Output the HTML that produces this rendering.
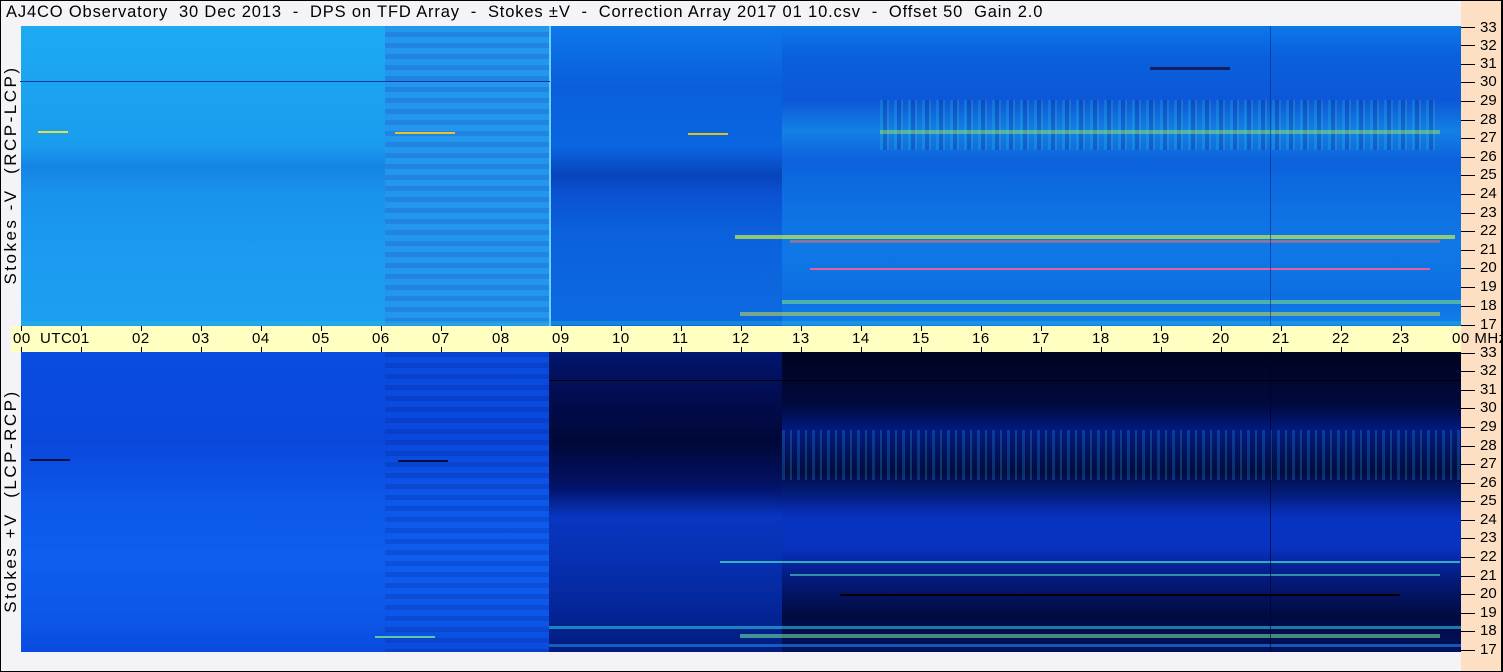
<!DOCTYPE html>
<html><head><meta charset="utf-8"><style>
*{margin:0;padding:0;box-sizing:border-box}
body{width:1503px;height:672px;overflow:hidden;background:#f4f4f8;font-family:"Liberation Sans",sans-serif;position:relative}
.a{position:absolute}
#frame{left:0;top:0;width:1503px;height:672px;border:1px solid #000;border-right:2px solid #000;border-bottom:1px solid #000;z-index:50}
.title{left:6px;top:3px;font-size:16.5px;letter-spacing:0.85px;white-space:pre;color:#000}
.peach{left:1461px;top:0;width:42px;height:672px;background:#fde0c4}
.strip{left:11px;top:326px;width:1450px;height:26px;background:#ffffc2}
.tl{font-size:15px;top:330px;white-space:pre;letter-spacing:.5px}
.yl{font-size:15px;left:1480px;line-height:14px}
.yk{left:1461px;width:14px;height:1px;background:#000}
.vl{font-size:17px;letter-spacing:2.5px;white-space:pre;transform:rotate(-90deg);transform-origin:center;width:300px;text-align:center}
.s{position:absolute;height:2px}
</style></head><body>
<div class="a" id="frame"></div>
<div class="a peach"></div>
<div class="a title">AJ4CO Observatory  30 Dec 2013  -  DPS on TFD Array  -  Stokes ±V  -  Correction Array 2017 01 10.csv  -  Offset 50  Gain 2.0</div>

<!-- TOP PLOT -->
<div class="a" style="left:21px;top:26px;width:364px;height:300px;background:linear-gradient(#1eaaf2 0%,#1a9cee 40%,#1684e4 47%,#1892ec 55%,#1c9cf0 80%,#1e9ef0 100%)"></div>
<div class="a" style="left:385px;top:26px;width:164px;height:300px;background:repeating-linear-gradient(#1892ec 0 6px,#167ee2 6px 11px);opacity:.95"></div>
<div class="a" style="left:549px;top:26px;width:233px;height:300px;background:linear-gradient(#0e78ea 0%,#0a5edc 20%,#0a66e0 40%,#0844bc 50%,#0a52d2 56%,#0b62dc 70%,#0c6ae0 100%)"></div>
<div class="a" style="left:549px;top:26px;width:2px;height:300px;background:#6cd0ff"></div>
<div class="a" style="left:782px;top:26px;width:679px;height:300px;background:linear-gradient(#0c78ea 0%,#0a60dc 10%,#0c58d8 25%,#1480e6 35%,#0c62dc 45%,#0e70e2 60%,#1078e6 75%,#0d6ee2 90%,#1280e8 100%)"></div>
<div class="a" style="left:880px;top:100px;width:560px;height:50px;background:repeating-linear-gradient(90deg,rgba(40,220,200,.2) 0 3px,rgba(10,40,160,.25) 3px 7px,rgba(120,240,120,.15) 7px 9px,transparent 9px 14px)"></div>
<div class="s" style="left:20px;top:81px;width:530px;height:1px;background:#0a3aa0"></div>
<div class="s" style="left:880px;top:130px;width:560px;height:4px;background:rgba(170,240,80,.45)"></div>
<div class="s" style="left:38px;top:131px;width:30px;background:#e0e040"></div>
<div class="s" style="left:395px;top:132px;width:60px;background:#e8c030"></div>
<div class="s" style="left:688px;top:133px;width:40px;background:#e0c020"></div>
<div class="s" style="left:735px;top:235px;width:720px;height:4px;background:rgba(200,240,70,.7)"></div>
<div class="s" style="left:790px;top:240px;width:650px;height:3px;background:rgba(240,120,100,.5)"></div>
<div class="s" style="left:810px;top:268px;width:620px;background:#e860a0"></div>
<div class="s" style="left:782px;top:300px;width:679px;height:4px;background:rgba(140,240,120,.5)"></div>
<div class="s" style="left:740px;top:312px;width:700px;height:4px;background:rgba(220,230,60,.5)"></div>
<div class="s" style="left:21px;top:321px;width:1440px;height:4px;background:rgba(40,200,220,.3)"></div>
<div class="s" style="left:1150px;top:67px;width:80px;height:3px;background:#102060"></div>
<div class="s" style="left:1270px;top:26px;width:1px;height:300px;background:rgba(0,30,120,.5)"></div>

<!-- STRIP -->
<div class="a strip"></div>
<div class="a tl" style="left:13px">00  UTC</div>
<div class="a tl" style="left:72px">01</div><div class="a tl" style="left:132px">02</div><div class="a tl" style="left:192px">03</div><div class="a tl" style="left:252px">04</div><div class="a tl" style="left:312px">05</div><div class="a tl" style="left:372px">06</div><div class="a tl" style="left:432px">07</div><div class="a tl" style="left:492px">08</div><div class="a tl" style="left:552px">09</div><div class="a tl" style="left:612px">10</div><div class="a tl" style="left:672px">11</div><div class="a tl" style="left:732px">12</div><div class="a tl" style="left:792px">13</div><div class="a tl" style="left:852px">14</div><div class="a tl" style="left:912px">15</div><div class="a tl" style="left:972px">16</div><div class="a tl" style="left:1032px">17</div><div class="a tl" style="left:1092px">18</div><div class="a tl" style="left:1152px">19</div><div class="a tl" style="left:1212px">20</div><div class="a tl" style="left:1272px">21</div><div class="a tl" style="left:1332px">22</div><div class="a tl" style="left:1392px">23</div><div class="a tl" style="left:1452px">00 MHz</div>
<div class="a" style="left:0;top:326px;width:1461px;height:26px;background:repeating-linear-gradient(90deg,#000 0 1px,transparent 1px 60px) 21px 0/1440px 5px no-repeat,repeating-linear-gradient(90deg,#000 0 1px,transparent 1px 60px) 21px 21px/1441px 5px no-repeat"></div>

<!-- BOTTOM PLOT -->
<div class="a" style="left:21px;top:352px;width:528px;height:300px;background:linear-gradient(#0a4ce0 0%,#0a48dc 30%,#0c58ea 50%,#0e5ef0 70%,#0c56e8 90%,#0a4ade 100%)"></div>
<div class="a" style="left:385px;top:352px;width:164px;height:300px;background:repeating-linear-gradient(rgba(0,20,120,.18) 0 5px,transparent 5px 11px)"></div>
<div class="a" style="left:549px;top:352px;width:233px;height:300px;background:linear-gradient(#021670 0%,#020c50 15%,#000838 30%,#021268 45%,#0836c0 55%,#0630b0 70%,#04269a 85%,#041c80 100%)"></div>
<div class="a" style="left:782px;top:352px;width:679px;height:300px;background:linear-gradient(#000420 0%,#010a40 18%,#021a80 26%,#010c40 40%,#041e80 48%,#0832c0 55%,#0832c0 65%,#041c80 75%,#020a40 88%,#031060 100%)"></div>
<div class="a" style="left:782px;top:430px;width:679px;height:50px;background:repeating-linear-gradient(90deg,rgba(30,160,240,.25) 0 3px,transparent 3px 8px,rgba(60,220,220,.2) 8px 10px,transparent 10px 15px)"></div>
<div class="s" style="left:549px;top:380px;width:912px;height:1px;background:#000"></div>
<div class="s" style="left:30px;top:459px;width:40px;background:#051040"></div>
<div class="s" style="left:398px;top:460px;width:50px;background:#051040"></div>
<div class="s" style="left:720px;top:561px;width:740px;background:rgba(80,230,200,.7)"></div>
<div class="s" style="left:790px;top:574px;width:650px;background:rgba(80,220,200,.6)"></div>
<div class="s" style="left:840px;top:594px;width:560px;background:#000"></div>
<div class="s" style="left:549px;top:626px;width:912px;height:3px;background:rgba(40,200,230,.6)"></div>
<div class="s" style="left:740px;top:634px;width:700px;height:4px;background:rgba(120,240,160,.55)"></div>
<div class="s" style="left:375px;top:636px;width:60px;background:rgba(120,230,140,.8)"></div>
<div class="s" style="left:549px;top:644px;width:912px;height:3px;background:rgba(30,140,230,.6)"></div>
<div class="s" style="left:1270px;top:352px;width:1px;height:300px;background:rgba(0,0,30,.6)"></div>

<!-- vertical labels -->
<div class="a vl" style="left:-139px;top:165px">Stokes -V  (RCP-LCP)</div>
<div class="a vl" style="left:-139px;top:491px">Stokes +V  (LCP-RCP)</div>

<!-- right axis top -->
<div class="a yk" style="top:27px"></div><div class="a yl" style="top:21px">33</div>
<div class="a yk" style="top:45px"></div><div class="a yl" style="top:39px">32</div>
<div class="a yk" style="top:64px"></div><div class="a yl" style="top:57px">31</div>
<div class="a yk" style="top:82px"></div><div class="a yl" style="top:75px">30</div>
<div class="a yk" style="top:101px"></div><div class="a yl" style="top:94px">29</div>
<div class="a yk" style="top:120px"></div><div class="a yl" style="top:113px">28</div>
<div class="a yk" style="top:138px"></div><div class="a yl" style="top:131px">27</div>
<div class="a yk" style="top:157px"></div><div class="a yl" style="top:150px">26</div>
<div class="a yk" style="top:175px"></div><div class="a yl" style="top:168px">25</div>
<div class="a yk" style="top:194px"></div><div class="a yl" style="top:187px">24</div>
<div class="a yk" style="top:213px"></div><div class="a yl" style="top:206px">23</div>
<div class="a yk" style="top:231px"></div><div class="a yl" style="top:224px">22</div>
<div class="a yk" style="top:250px"></div><div class="a yl" style="top:243px">21</div>
<div class="a yk" style="top:268px"></div><div class="a yl" style="top:261px">20</div>
<div class="a yk" style="top:287px"></div><div class="a yl" style="top:280px">19</div>
<div class="a yk" style="top:306px"></div><div class="a yl" style="top:299px">18</div>
<div class="a yk" style="top:325px"></div><div class="a yl" style="top:318px">17</div>
<!-- right axis bottom -->
<div class="a yk" style="top:353px"></div><div class="a yl" style="top:346px">33</div>
<div class="a yk" style="top:371px"></div><div class="a yl" style="top:364px">32</div>
<div class="a yk" style="top:390px"></div><div class="a yl" style="top:383px">31</div>
<div class="a yk" style="top:408px"></div><div class="a yl" style="top:401px">30</div>
<div class="a yk" style="top:427px"></div><div class="a yl" style="top:420px">29</div>
<div class="a yk" style="top:446px"></div><div class="a yl" style="top:439px">28</div>
<div class="a yk" style="top:464px"></div><div class="a yl" style="top:457px">27</div>
<div class="a yk" style="top:483px"></div><div class="a yl" style="top:476px">26</div>
<div class="a yk" style="top:501px"></div><div class="a yl" style="top:494px">25</div>
<div class="a yk" style="top:520px"></div><div class="a yl" style="top:513px">24</div>
<div class="a yk" style="top:538px"></div><div class="a yl" style="top:531px">23</div>
<div class="a yk" style="top:557px"></div><div class="a yl" style="top:550px">22</div>
<div class="a yk" style="top:576px"></div><div class="a yl" style="top:569px">21</div>
<div class="a yk" style="top:594px"></div><div class="a yl" style="top:587px">20</div>
<div class="a yk" style="top:613px"></div><div class="a yl" style="top:606px">19</div>
<div class="a yk" style="top:631px"></div><div class="a yl" style="top:624px">18</div>
<div class="a yk" style="top:650px"></div><div class="a yl" style="top:643px">17</div>
</body></html>
